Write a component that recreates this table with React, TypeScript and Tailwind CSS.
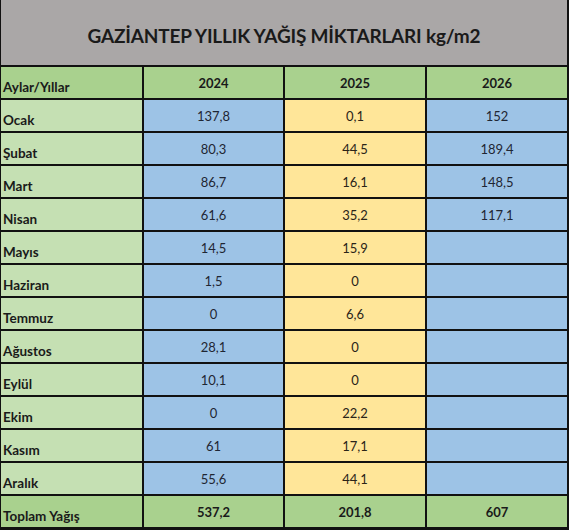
import React from "react";

const months: [string, string, string, string][] = [
  ["Ocak", "137,8", "0,1", "152"],
  ["Şubat", "80,3", "44,5", "189,4"],
  ["Mart", "86,7", "16,1", "148,5"],
  ["Nisan", "61,6", "35,2", "117,1"],
  ["Mayıs", "14,5", "15,9", ""],
  ["Haziran", "1,5", "0", ""],
  ["Temmuz", "0", "6,6", ""],
  ["Ağustos", "28,1", "0", ""],
  ["Eylül", "10,1", "0", ""],
  ["Ekim", "0", "22,2", ""],
  ["Kasım", "61", "17,1", ""],
  ["Aralık", "55,6", "44,1", ""],
];

export default function App() {
  return (
    <div
      className="w-[569px] h-[530px] bg-[#111] pl-[1px] pr-[2px] pb-[3px]"
      style={{ fontFamily: "Lato, 'Open Sans', sans-serif" }}
    >
      <div className="grid grid-cols-[141px_139px_140px_140px] grid-rows-[65px_repeat(14,31px)] gap-[2px]">
        <div className="col-span-4 bg-[#aaa7a7] flex items-center justify-center pt-[8px] text-[19px] tracking-[-0.2px] font-bold text-[#1a1a1a]">
          GAZİANTEP YILLIK YAĞIŞ MİKTARLARI kg/m2
        </div>

        <div className="bg-[#a9d18e] flex items-end pl-[2px] pb-[1px] text-[13.5px] font-bold text-[#1a1a1a]">
          Aylar/Yıllar
        </div>
        {["2024", "2025", "2026"].map((y) => (
          <div
            key={y}
            className="bg-[#a9d18e] flex items-center justify-center pt-[3px] text-[13px] font-bold text-[#1a1a1a]"
          >
            {y}
          </div>
        ))}

        {months.map(([m, a, b, c]) => (
          <React.Fragment key={m}>
            <div className="bg-[#c5e0b3] flex items-end pl-[2px] pb-[1px] text-[13.5px] font-bold text-[#1a1a1a]">
              {m}
            </div>
            <div className="bg-[#9dc3e6] flex items-center justify-center pt-[3px] text-[13px] text-[#1f2633]">
              {a}
            </div>
            <div className="bg-[#ffe699] flex items-center justify-center pt-[3px] text-[13px] text-[#2a2418]">
              {b}
            </div>
            <div className="bg-[#9dc3e6] flex items-center justify-center pt-[3px] text-[13px] text-[#1f2633]">
              {c}
            </div>
          </React.Fragment>
        ))}

        <div className="bg-[#a9d18e] flex items-end pl-[2px] pb-[1px] text-[13.5px] font-bold text-[#1a1a1a]">
          Toplam Yağış
        </div>
        {["537,2", "201,8", "607"].map((v) => (
          <div
            key={v}
            className="bg-[#a9d18e] flex items-center justify-center pt-[3px] text-[13px] font-bold text-[#1a1a1a]"
          >
            {v}
          </div>
        ))}
      </div>
    </div>
  );
}
